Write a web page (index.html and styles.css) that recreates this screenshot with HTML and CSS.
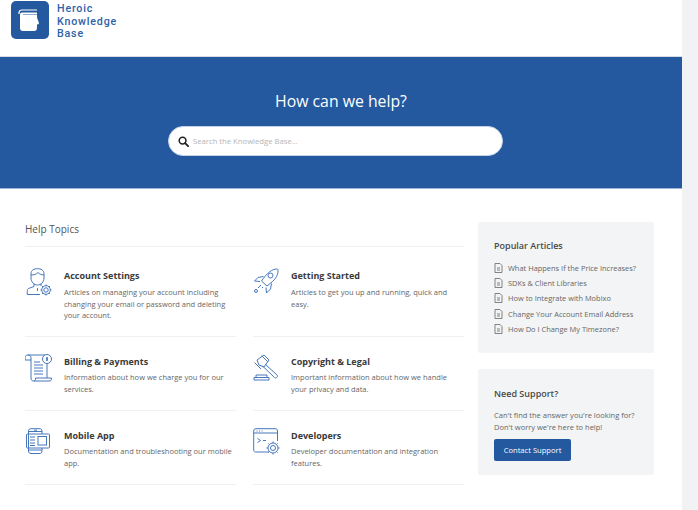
FILE: index.html
```html
<!DOCTYPE html>
<html lang="en">
<head>
<meta charset="utf-8">
<title>Heroic Knowledge Base</title>
<link rel="stylesheet" href="styles.css">
</head>
<body>
<div class="page">
  <header class="site-header">
    <svg class="logo" viewBox="0 0 38 38" aria-hidden="true">
      <rect x="0" y="0" width="38" height="38" rx="5" fill="#24589f"/>
      <path d="M8 13V12a3 3 0 0 1 3-3H26" fill="none" stroke="#fff" stroke-width="1.2"/>
      <path d="M9 13.5 Q9 11.5 11 11.5H26V13.5H12V14H26Q26 17 26.5 18L28 22Q28 23.500 26 23.500V27Q26 30 23 30H12Q9 30 9 27Z" fill="#fff"/>
    </svg>
    <div class="logo-text">Heroic<br>Knowledge<br>Base</div>
  </header>

  <section class="hero">
    <h1 class="hero-title">How can we help?</h1>
    <div class="search">
      <svg class="search-icon" viewBox="0 0 12 12" aria-hidden="true">
        <circle cx="5" cy="5" r="3.700" fill="none" stroke="#222" stroke-width="1.700"/>
        <path d="M7.800 7.800 11 11" stroke="#222" stroke-width="2" stroke-linecap="round"/>
      </svg>
      <span class="search-placeholder">Search the Knowledge Base...</span>
    </div>
  </section>

  <main class="content">
    <div class="topics">
      <h2 class="topics-title">Help Topics</h2>
      <div class="topic-grid">
        <article class="topic topic-first">
          <svg class="icon" viewBox="0 0 28 28" aria-hidden="true">
            <path d="M6 6C6 2 9 .7 12.500 .7S19 2 19 6V10C19 14 16 17 12.500 17S6 14 6 10Z"/>
            <path d="M6 7C9 7 11 6.500 13 4.500C14.500 6 17 7 19 7"/>
            <path d="M9 16V18.500L3.500 20.500C2.500 21 2.200 22 2.200 26.500H15"/>
            <path d="M16 16V18"/>
            <path d="M12.500 20V23"/>
            <circle cx="21" cy="22" r="2.200"/>
            <circle cx="21" cy="22" r="4.300"/>
            <path d="M21 16.500V17.700M21 26.300V27.500M15.500 22H16.700M25.300 22H26.500M17.100 18.100 18 19M24 25 24.900 25.900M24.900 18.100 24 19M18 25 17.100 25.900"/>
          </svg>
          <div class="topic-body">
            <h3 class="topic-title">Account Settings</h3>
            <p class="topic-desc">Articles on managing your account including changing your email or password and deleting your account.</p>
          </div>
        </article>
        <article class="topic topic-first">
          <svg class="icon" viewBox="0 0 28 28" aria-hidden="true">
            <path d="M24 1C25 1 25 2 25 3C25 8 22 12 14 18L8.500 13C14 5 19 1 24 1Z"/>
            <circle cx="17.500" cy="7.500" r="2.500"/>
            <path d="M10.500 8.500 5 9.500 1.500 13 7 13.500"/>
            <path d="M18.500 15.500 17.500 21 13.500 25 13 19.500"/>
            <path d="M8 17 5 20M10 19 9 20"/>
            <circle cx="3" cy="23" r="1.500"/>
          </svg>
          <div class="topic-body">
            <h3 class="topic-title">Getting Started</h3>
            <p class="topic-desc">Articles to get you up and running, quick and easy.</p>
          </div>
        </article>
        <article class="topic">
          <svg class="icon" viewBox="0 0 28 28" aria-hidden="true">
            <path d="M3 1H20"/>
            <path d="M3 1C1 1 0 2 0 4V6H6V4C6 2 5 1 3 1Z"/>
            <path d="M6 6V24C6 26 7 27 9 27H24C26 27 26.500 26 26.500 24H10.500V25C10.500 26 10 27 9 27"/>
            <path d="M22 10V24"/>
            <path d="M9 8H15M9 11H18M9 14H18M9 17H18M9 20H18"/>
            <circle cx="22" cy="5" r="4.500"/>
            <path d="M22 3V7M23 3.800H21.500V5H22.500V6.200H21"/>
          </svg>
          <div class="topic-body">
            <h3 class="topic-title">Billing &amp; Payments</h3>
            <p class="topic-desc">Information about how we charge you for our services.</p>
          </div>
        </article>
        <article class="topic">
          <svg class="icon" viewBox="0 0 28 28" aria-hidden="true">
            <path d="M8.500 1.500 15 8M1.500 8.500 8 15M4 6 11 1 16 6 11 13 6 11Z"/>
            <path d="M12 10 24 21C25.500 22.500 23 25 21.500 23.500L9.500 12"/>
            <path d="M3 21H14V23.500H3ZM1 23.500H16V26H1Z"/>
          </svg>
          <div class="topic-body">
            <h3 class="topic-title">Copyright &amp; Legal</h3>
            <p class="topic-desc">Important information about how we handle your privacy and data.</p>
          </div>
        </article>
        <article class="topic">
          <svg class="icon" viewBox="0 0 28 28" aria-hidden="true">
            <path d="M17 6V3C17 1.500 16 .7 15 .7H6C4.500 .7 3.500 1.500 3.500 3V23C3.500 24.500 4.500 25.500 6 25.500H15C16 25.500 17 24.500 17 23V20"/>
            <path d="M3.500 3.500H17M3.500 22H17M9 2.200H12"/>
            <rect x="1.500" y="6" width="23" height="14" rx="1"/>
            <path d="M5 9H10M5 12H10M5 15H10M5 17.500H10"/>
            <rect x="13" y="8.500" width="8.500" height="8.500"/>
          </svg>
          <div class="topic-body">
            <h3 class="topic-title">Mobile App</h3>
            <p class="topic-desc">Documentation and troubleshooting our mobile app.</p>
          </div>
        </article>
        <article class="topic">
          <svg class="icon" viewBox="0 0 28 28" aria-hidden="true">
            <path d="M16 24H2.500C1.500 24 .7 23 .7 22V3C.7 1.500 1.500 .7 3 .7H22C23.500 .7 24.500 1.500 24.500 3V13"/>
            <path d="M.7 5H24.500M3.500 3H4.500M6 3H7M8.500 3H9.500"/>
            <path d="M4.500 10.500 7.500 12.500 4.500 14.500M10 12.500H13"/>
            <circle cx="20" cy="20" r="2.500"/>
            <circle cx="20" cy="20" r="5"/>
            <path d="M20 13.500V15M20 25V26.500M13.500 20H15M25 20H26.500M15.400 15.400 16.500 16.500M23.500 23.500 24.600 24.600M24.600 15.400 23.500 16.500M16.500 23.500 15.400 24.600"/>
          </svg>
          <div class="topic-body">
            <h3 class="topic-title">Developers</h3>
            <p class="topic-desc">Developer documentation and integration features.</p>
          </div>
        </article>
      </div>
    </div>

    <aside class="sidebar">
      <section class="panel panel-articles">
        <h2 class="panel-title">Popular Articles</h2>
        <ul class="article-list">
          <li class="article"><svg class="doc" viewBox="0 0 9 10" aria-hidden="true"><path d="M1 .5H6L8 2.500V9.500H1Z"/><path d="M3 5H6M3 7H6"/></svg>What Happens If the Price Increases?</li>
          <li class="article"><svg class="doc" viewBox="0 0 9 10" aria-hidden="true"><path d="M1 .5H6L8 2.500V9.500H1Z"/><path d="M3 5H6M3 7H6"/></svg>SDKs &amp; Client Libraries</li>
          <li class="article"><svg class="doc" viewBox="0 0 9 10" aria-hidden="true"><path d="M1 .5H6L8 2.500V9.500H1Z"/><path d="M3 5H6M3 7H6"/></svg>How to Integrate with Mobixo</li>
          <li class="article"><svg class="doc" viewBox="0 0 9 10" aria-hidden="true"><path d="M1 .5H6L8 2.500V9.500H1Z"/><path d="M3 5H6M3 7H6"/></svg>Change Your Account Email Address</li>
          <li class="article"><svg class="doc" viewBox="0 0 9 10" aria-hidden="true"><path d="M1 .5H6L8 2.500V9.500H1Z"/><path d="M3 5H6M3 7H6"/></svg>How Do I Change My Timezone?</li>
        </ul>
      </section>
      <section class="panel panel-support">
        <h2 class="panel-title">Need Support?</h2>
        <p class="support-text">Can't find the answer you're looking for? Don't worry we're here to help!</p>
        <a class="button" href="#">Contact Support</a>
      </section>
    </aside>
  </main>
</div>
<div class="scroll-strip"></div>
</body>
</html>
```

FILE: styles.css
```css
* { box-sizing: border-box; }
html, body { margin: 0; padding: 0; height: 100%; }
body {
  display: flex;
  width: 698px;
  height: 510px;
  overflow: hidden;
  background: #fff;
  font-family: "Open Sans", "Liberation Sans", sans-serif;
  color: #555;
}
.page { width: 682px; flex: none; }
.scroll-strip { width: 16px; flex: none; background: #f1f2f4; }

.site-header {
  height: 57px;
  padding: 1px 0 0 11px;
  display: flex;
  gap: 8px;
  border-bottom: 1px solid #d9dde3;
}
.logo { width: 38px; height: 38px; flex: none; }
.logo-text {
  padding-top: 2px;
  font-family: Roboto, sans-serif;
  font-size: 10.700px;
  font-weight: 500;
  letter-spacing: .8px;
  line-height: 12.600px;
  color: #2e62a8;
}

.hero {
  height: 132px;
  background: #24589f;
  border-bottom: 1px solid #9db4d6;
  padding-top: 33px;
  display: flex;
  flex-direction: column;
  align-items: center;
}
.hero-title {
  margin: 0;
  font-size: 15.800px;
  font-weight: 400;
  line-height: 23px;
  color: #fff;
}
.search {
  width: 335px;
  height: 30px;
  margin: 13px 11px 0 0;
  padding-left: 9px;
  display: flex;
  align-items: center;
  gap: 4px;
  background: #fff;
  border: 1px solid #c5d3e6;
  border-radius: 15px;
}
.search-icon { width: 11px; height: 11px; flex: none; }
.search-placeholder { font-size: 7.700px; color: #b5b5b5; }

.content {
  display: flex;
  gap: 14px;
  padding: 33px 28px 0 25px;
}
.topics { width: 439px; flex: none; }
.topics-title {
  margin: 0;
  height: 25px;
  font-size: 10px;
  font-weight: 400;
  line-height: 14px;
  color: #555;
  border-bottom: 1px solid #f1f1f1;
}
.topic-grid {
  display: grid;
  grid-template-columns: 211px 211px;
  grid-template-rows: 90px 74px 74px;
  column-gap: 17px;
}
.topic {
  display: flex;
  align-items: flex-start;
  padding-top: 17px;
  border-bottom: 1px solid #f1f1f1;
}
.topic-first { padding-top: 21px; }
.topic-first .topic-desc { margin-top: 5px; }
.icon {
  width: 28px;
  height: 28px;
  flex: none;
  margin-right: 11px;
  fill: none;
  stroke: #4677bb;
  stroke-width: 1;
}
.topic:nth-child(even) .icon { margin-right: 10px; }
.topic-body { padding-top: 2px; }
.topic-title {
  margin: 0;
  font-size: 9px;
  font-weight: 700;
  line-height: 12px;
  color: #3a3a3a;
}
.topic-desc {
  margin: 4px 0 0;
  font-size: 7.500px;
  line-height: 11.600px;
  color: #666;
}

.sidebar { width: 176px; flex: none; }
.panel {
  background: #f3f4f5;
  border-radius: 2px;
  padding: 0 16px;
}
.panel-articles { height: 131px; padding-top: 17px; }
.panel-support { height: 106px; margin-top: 16px; padding-top: 18px; }
.panel-title {
  margin: 0;
  font-size: 9px;
  font-weight: 600;
  line-height: 13px;
  color: #4a4a4a;
}
.article-list {
  list-style: none;
  margin: 8px 0 0;
  padding: 0;
}
.article {
  display: flex;
  align-items: center;
  gap: 5px;
  height: 15.400px;
  font-size: 7.450px;
  white-space: nowrap;
  color: #666;
}
.doc {
  width: 9px;
  height: 10px;
  flex: none;
  fill: none;
  stroke: #666;
  stroke-width: .8;
}
.support-text {
  margin: 10px 0 0;
  font-size: 7.500px;
  line-height: 11.500px;
  color: #666;
}
.button {
  display: block;
  width: 77px;
  height: 22px;
  margin-top: 6px;
  background: #24589f;
  border-radius: 2px;
  font-size: 7.600px;
  line-height: 22px;
  text-align: center;
  text-decoration: none;
  color: #fff;
}
```
